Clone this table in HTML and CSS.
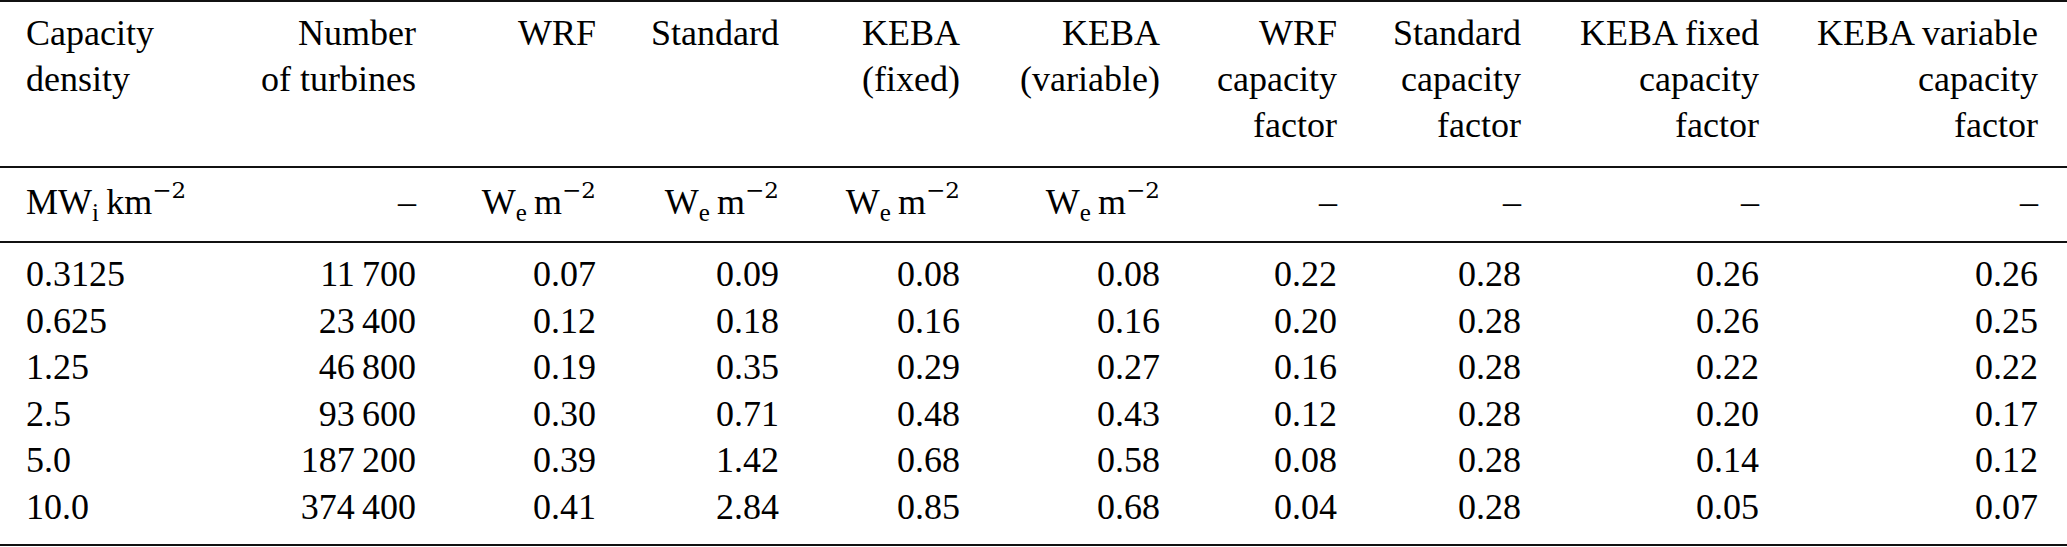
FILE: index.html
```html
<!DOCTYPE html>
<html lang="en">
<head>
<meta charset="utf-8">
<title>Capacity density table</title>
<link rel="stylesheet" href="styles.css">
</head>
<body>
<table class="tbl">
  <colgroup>
    <col class="c1"><col class="c2"><col class="c3"><col class="c4"><col class="c5">
    <col class="c6"><col class="c7"><col class="c8"><col class="c9"><col class="c10">
  </colgroup>
  <thead>
    <tr class="head">
      <th class="left">Capacity<br>density</th>
      <th>Number<br>of turbines</th>
      <th>WRF</th>
      <th>Standard</th>
      <th>KEBA<br>(fixed)</th>
      <th>KEBA<br>(variable)</th>
      <th>WRF<br>capacity<br>factor</th>
      <th>Standard<br>capacity<br>factor</th>
      <th>KEBA fixed<br>capacity<br>factor</th>
      <th class="last">KEBA variable<br>capacity<br>factor</th>
    </tr>
    <tr class="units">
      <th class="left">MW<sub>i</sub>&#8201;km<sup>−2</sup></th>
      <th>–</th>
      <th>W<sub>e</sub>&#8201;m<sup>−2</sup></th>
      <th>W<sub>e</sub>&#8201;m<sup>−2</sup></th>
      <th>W<sub>e</sub>&#8201;m<sup>−2</sup></th>
      <th>W<sub>e</sub>&#8201;m<sup>−2</sup></th>
      <th>–</th>
      <th>–</th>
      <th>–</th>
      <th class="last">–</th>
    </tr>
  </thead>
  <tbody>
    <tr class="first">
      <td class="left">0.3125</td><td>11&#8201;700</td><td>0.07</td><td>0.09</td><td>0.08</td><td>0.08</td><td>0.22</td><td>0.28</td><td>0.26</td><td class="last">0.26</td>
    </tr>
    <tr>
      <td class="left">0.625</td><td>23&#8201;400</td><td>0.12</td><td>0.18</td><td>0.16</td><td>0.16</td><td>0.20</td><td>0.28</td><td>0.26</td><td class="last">0.25</td>
    </tr>
    <tr>
      <td class="left">1.25</td><td>46&#8201;800</td><td>0.19</td><td>0.35</td><td>0.29</td><td>0.27</td><td>0.16</td><td>0.28</td><td>0.22</td><td class="last">0.22</td>
    </tr>
    <tr>
      <td class="left">2.5</td><td>93&#8201;600</td><td>0.30</td><td>0.71</td><td>0.48</td><td>0.43</td><td>0.12</td><td>0.28</td><td>0.20</td><td class="last">0.17</td>
    </tr>
    <tr>
      <td class="left">5.0</td><td>187&#8201;200</td><td>0.39</td><td>1.42</td><td>0.68</td><td>0.58</td><td>0.08</td><td>0.28</td><td>0.14</td><td class="last">0.12</td>
    </tr>
    <tr class="final">
      <td class="left">10.0</td><td>374&#8201;400</td><td>0.41</td><td>2.84</td><td>0.85</td><td>0.68</td><td>0.04</td><td>0.28</td><td>0.05</td><td class="last">0.07</td>
    </tr>
  </tbody>
</table>
</body>
</html>
```

FILE: styles.css
```css
html, body {
  margin: 0;
  padding: 0;
  background: #ffffff;
}

.tbl {
  width: 2067px;
  table-layout: fixed;
  border-collapse: separate;
  border-spacing: 0;
  font-family: "Liberation Serif", "Times New Roman", serif;
  font-size: 36px;
  color: #000000;
}

.c1 { width: 200px; }
.c2 { width: 229px; }
.c3 { width: 180px; }
.c4 { width: 183px; }
.c5 { width: 181px; }
.c6 { width: 200px; }
.c7 { width: 177px; }
.c8 { width: 184px; }
.c9 { width: 238px; }
.c10 { width: 295px; }

.tbl th,
.tbl td {
  font-family: inherit;
  font-weight: normal;
  text-align: right;
  white-space: nowrap;
  padding: 0 13px;
  vertical-align: top;
}

.tbl .left {
  text-align: left;
  padding-left: 26px;
}

.tbl .last {
  padding-right: 29px;
}

.head th {
  line-height: 46px;
  border-top: 2px solid #111;
  border-bottom: 2px solid #111;
  padding-top: 8px;
  padding-bottom: 18px;
}

.units th {
  line-height: 46px;
  padding-top: 11px;
  padding-bottom: 16px;
  border-bottom: 2px solid #111;
}

.tbl td {
  line-height: 46.5px;
}

.first td {
  padding-top: 8px;
}

.final td {
  padding-bottom: 14px;
  border-bottom: 2px solid #111;
}

.tbl sup {
  font-family: "DejaVu Serif", "Liberation Serif", serif;
  font-size: 23px;
  line-height: 0;
  vertical-align: 16px;
}

.tbl sub {
  font-size: 25px;
  line-height: 0;
  vertical-align: -7px;
}
```
